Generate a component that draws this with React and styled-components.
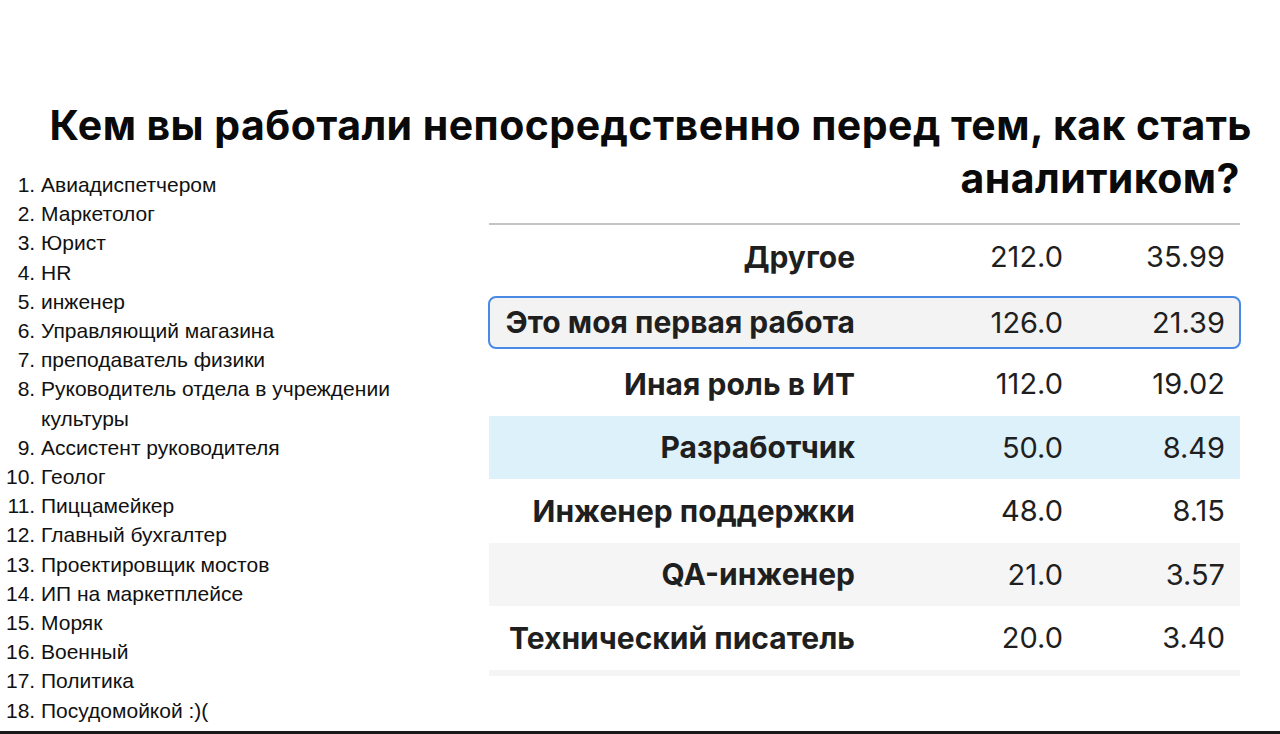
import styled, { createGlobalStyle } from 'styled-components'

const GlobalStyle = createGlobalStyle`
    html, body {
        margin: 0;
        padding: 0;
        background: #ffffff;
    }
`

const professions = [
    'Авиадиспетчером',
    'Маркетолог',
    'Юрист',
    'HR',
    'инженер',
    'Управляющий магазина',
    'преподаватель физики',
    'Руководитель отдела в учреждении культуры',
    'Ассистент руководителя',
    'Геолог',
    'Пиццамейкер',
    'Главный бухгалтер',
    'Проектировщик мостов',
    'ИП на маркетплейсе',
    'Моряк',
    'Военный',
    'Политика',
    'Посудомойкой :)(',
]

const rows = [
    { label: 'Другое', count: '212.0', share: '35.99' },
    { label: 'Это моя первая работа', count: '126.0', share: '21.39', tone: 'highlight' },
    { label: 'Иная роль в ИТ', count: '112.0', share: '19.02' },
    { label: 'Разработчик', count: '50.0', share: '8.49', tone: 'blue' },
    { label: 'Инженер поддержки', count: '48.0', share: '8.15' },
    { label: 'QA-инженер', count: '21.0', share: '3.57', tone: 'grey' },
    { label: 'Технический писатель', count: '20.0', share: '3.40' },
]

const App = () => {
    return (
        <>
            <GlobalStyle />
            <Slide>
                <Header>
                    <Title>
                        Кем вы работали непосредственно перед тем, как стать
                        <br />
                        <LastLine>аналитиком?</LastLine>
                    </Title>
                </Header>
                <Content>
                    <ListColumn>
                        <List>
                            {professions.map((item, index) => (
                                <ListItem key={index}>{item}</ListItem>
                            ))}
                        </List>
                    </ListColumn>
                    <TableColumn>
                        <Table>
                            {rows.map((row) => (
                                <Row key={row.label} $tone={row.tone}>
                                    <Label>{row.label}</Label>
                                    <Value>{row.count}</Value>
                                    <Value>{row.share}</Value>
                                </Row>
                            ))}
                            <TableFoot />
                        </Table>
                    </TableColumn>
                </Content>
            </Slide>
        </>
    )
}

export default App

const Slide = styled.div`
    width: 1280px;
    height: 734px;
    box-sizing: border-box;
    border-bottom: 3px solid #1a1a1a;
    display: flex;
    flex-direction: column;
    overflow: hidden;
    background: #ffffff;
`

const Header = styled.header`
    padding: 99px 28px 0 0;
`

const Title = styled.h1`
    margin: 0;
    text-align: right;
    font-family: Inter, "Noto Sans", sans-serif;
    font-weight: 700;
    font-size: 41px;
    letter-spacing: 0.45px;
    line-height: 53px;
    color: #0a0a0a;
    white-space: nowrap;
`

const LastLine = styled.span`
    display: inline-block;
    margin-right: 12px;
`

const Content = styled.div`
    display: flex;
    margin-top: -35px;
`

const ListColumn = styled.div`
    width: 440px;
    flex-shrink: 0;
`

const List = styled.ol`
    margin: 0;
    padding: 0 0 0 41px;
    font-family: "Liberation Sans", Arial, sans-serif;
    font-size: 21px;
    line-height: 29.2px;
    color: #111111;
`

const ListItem = styled.li`
    padding-left: 0;
`

const TableColumn = styled.div`
    padding: 53px 0 0 49px;
    width: 751px;
`

const Table = styled.div`
    border-top: 2px solid #c4c4c4;
    font-family: Inter, "Noto Sans", sans-serif;
    color: #1f1f1f;
`

const Row = styled.div`
    display: grid;
    grid-template-columns: 366px 208px 162px;
    align-items: center;
    height: 63.5px;
    padding-right: 15px;
    box-sizing: border-box;
    background: ${({ $tone }) =>
        $tone === 'blue' ? '#ddf1fb' : $tone === 'grey' ? '#f5f5f5' : 'transparent'};

    ${({ $tone }) =>
        $tone === 'highlight' &&
        `
        height: 53px;
        margin: 7px -1px 3.5px;
        padding-right: 14px;
        grid-template-columns: 365px 208px 162px;
        background: #f3f3f3;
        border: 2px solid #4a89e6;
        border-radius: 8px;
        `}
`

const Label = styled.div`
    text-align: right;
    font-weight: 700;
    font-size: 30px;
`

const Value = styled.div`
    text-align: right;
    font-weight: 400;
    font-size: 29px;
`

const TableFoot = styled.div`
    height: 6px;
    background: #f5f5f5;
`
